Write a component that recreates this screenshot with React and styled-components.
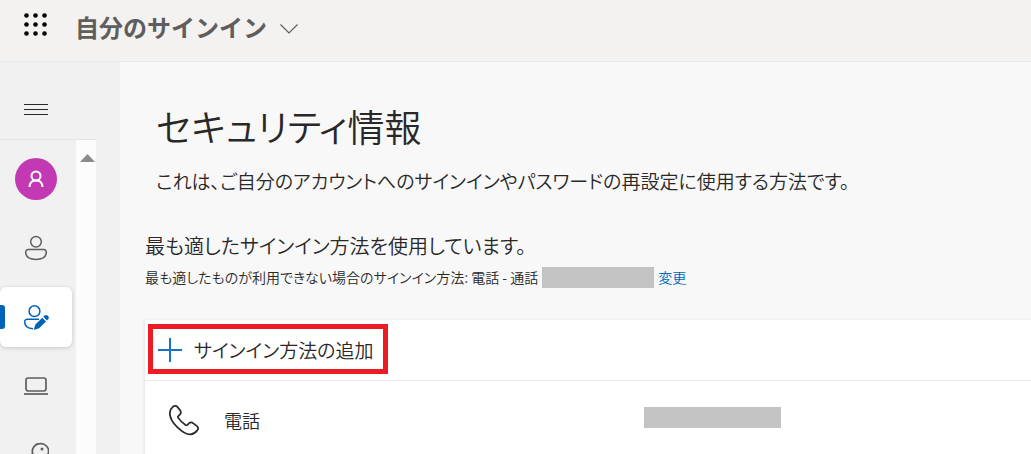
import styled, { createGlobalStyle } from 'styled-components';

const GlobalStyle = createGlobalStyle`
    * {
        box-sizing: border-box;
    }

    body {
        margin: 0;
        color: #292827;
        background: #f8f8f8;
        font-family: "Noto Sans CJK JP", "Noto Sans", sans-serif;
        font-weight: 350;
        font-feature-settings: "palt";
    }

    button {
        padding: 0;
        border: 0;
        color: inherit;
        background: none;
        font: inherit;
        cursor: pointer;
    }

    svg {
        display: block;
        flex: none;
    }
`;

const Page = styled.div`
    display: flex;
    flex-direction: column;
    height: 100vh;
    overflow: hidden;
`;

const Header = styled.header`
    display: flex;
    flex: none;
    align-items: center;
    height: 62px;
    padding: 0 24px 12px;
    gap: 27px;
    background: #f3f2f0;
    border-bottom: 1px solid #e9e9e9;
`;

const AppTitle = styled.button`
    display: flex;
    align-items: center;
    gap: 13px;
    padding-top: 4px;
    color: #605e5c;
    font-size: 24px;
    font-weight: 700;
    line-height: 32px;
    font-feature-settings: normal;

    svg {
        margin-top: 4px;
    }
`;

const Body = styled.div`
    display: flex;
    flex: 1;
    min-height: 0;
`;

const Sidebar = styled.nav`
    display: flex;
    flex: none;
    flex-direction: column;
    width: 120px;
    padding-right: 24px;
    background: #f1f1f1;
`;

const MenuToggle = styled.button`
    display: flex;
    flex: none;
    align-items: center;
    height: 78px;
    padding: 18px 24px 0;
    border-bottom: 1px solid #e5e5e5;
`;

const NavArea = styled.div`
    display: flex;
    flex: 1;
    min-height: 0;
    overflow: hidden;
`;

const NavList = styled.ul`
    display: flex;
    flex: 1;
    flex-direction: column;
    gap: 9px;
    margin: 0;
    padding: 9px 4px 0 0;
    list-style: none;
`;

const NavLink = styled.a`
    position: relative;
    display: flex;
    align-items: center;
    justify-content: center;
    height: 60px;
    color: ${({ $active }) => ($active ? '#0063b8' : '#5f5e5c')};
    background: ${({ $active }) => ($active ? '#fff' : 'transparent')};
    border-radius: 6px;
    box-shadow: ${({ $active }) => ($active ? '0 1px 4px rgba(0, 0, 0, 0.18)' : 'none')};
`;

const ActiveMark = styled.span`
    position: absolute;
    top: 18px;
    left: 0;
    width: 5px;
    height: 24px;
    background: #0063b8;
    border-radius: 0 3px 3px 0;
`;

const Avatar = styled.span`
    display: flex;
    align-items: center;
    justify-content: center;
    width: 42px;
    height: 42px;
    color: #fff;
    background: #c239b3;
    border-radius: 50%;
`;

const ScrollTrack = styled.div`
    flex: none;
    width: 20px;
    padding: 14px 3px 0 4px;
    background: #fcfcfc;
`;

const Main = styled.main`
    flex: 1;
    min-width: 0;
    padding: 36px 0 0 25px;
`;

const Intro = styled.div`
    padding-left: 11px;
`;

const Title = styled.h1`
    margin: 0;
    font-size: 37px;
    font-weight: 350;
    line-height: 56px;
`;

const Description = styled.p`
    margin: 12px 0 0;
    font-size: 19px;
    line-height: 30px;
`;

const Summary = styled.section`
    padding-top: 32px;
`;

const SummaryTitle = styled.p`
    margin: 0;
    font-size: 20px;
    line-height: 35px;
`;

const SummaryText = styled.p`
    display: flex;
    align-items: center;
    margin: 0;
    gap: 4px;
    font-size: 14px;
    line-height: 28px;
`;

const ChangeLink = styled.a`
    color: #0067b8;
    text-decoration: none;
`;

const Redacted = styled.span`
    display: inline-block;
    width: ${({ $width }) => $width}px;
    height: 21px;
    background: #c3c3c3;
`;

const Card = styled.section`
    margin-top: 29px;
    background: #fff;
    box-shadow: 0 1px 4px rgba(0, 0, 0, 0.14);
`;

const Toolbar = styled.div`
    padding: 4px 3px 6px;
    border-bottom: 1px solid #eaeaea;
`;

const AddButton = styled.button`
    && {
        display: flex;
        align-items: center;
        width: 240px;
        height: 50px;
        padding: 2px 0 0 5px;
        gap: 12px;
        border: 5px solid #ed1c24;
        font-size: 19px;
        line-height: 30px;
    }
`;

const MethodList = styled.ul`
    margin: 0;
    padding: 0;
    list-style: none;
`;

const Method = styled.li`
    display: grid;
    grid-template-columns: 31px 396px auto;
    align-items: center;
    justify-content: start;
    height: 78px;
    padding-left: 24px;
    column-gap: 24px;
    font-size: 18px;
`;

function LauncherIcon() {
    const steps = [2, 11, 20];
    return (
        <svg width="24" height="24" viewBox="0 0 24 24" fill="#000" aria-hidden="true">
            {steps.map((y) => steps.map((x) => (
                <circle key={`${x}-${y}`} cx={x + 0.5} cy={y + 0.5} r="2.3" />
            )))}
        </svg>
    );
}

function ChevronIcon() {
    return (
        <svg width="18" height="10" viewBox="0 0 18 10" fill="none" stroke="currentColor" strokeWidth="1.2" aria-hidden="true">
            <path d="M.5.5 9 9 17.5.5" />
        </svg>
    );
}

function MenuIcon() {
    return (
        <svg width="24" height="12" viewBox="0 0 24 12" fill="none" stroke="#292827" aria-hidden="true">
            <path d="M0 .5h24M0 5.5h24M0 10.5h24" />
        </svg>
    );
}

function AvatarIcon() {
    return (
        <svg width="16" height="18" viewBox="0 0 16 18" fill="none" stroke="currentColor" strokeWidth="2" aria-hidden="true">
            <circle cx="8" cy="6" r="4.5" />
            <path d="M1.5 17c.3-3.8 2.8-6.4 6.5-6.4s6.2 2.6 6.5 6.4" />
        </svg>
    );
}

function PersonIcon() {
    return (
        <svg width="24" height="26" viewBox="0 0 24 26" fill="none" stroke="currentColor" strokeWidth="1.5" aria-hidden="true">
            <circle cx="12" cy="6.8" r="5.3" />
            <path d="M4.2 14.5h15.6a2.5 2.5 0 0 1 2.5 2.5c0 4.9-4.1 7.4-10.3 7.4S1.7 21.9 1.7 17a2.5 2.5 0 0 1 2.5-2.5Z" />
        </svg>
    );
}

function PersonEditIcon() {
    return (
        <svg width="26" height="26" viewBox="0 0 26 26" fill="none" stroke="currentColor" strokeWidth="1.5" aria-hidden="true">
            <circle cx="11.5" cy="7.2" r="5.4" />
            <path d="M16 15.2H4.2A2.5 2.5 0 0 0 1.7 17.7c0 4.3 3.2 6.7 8.3 7" />
            <path fill="currentColor" stroke="none" d="m19.3 13.7 3.7 3.7-6.9 6.9-4.7 1.5c-.4.1-.6-.1-.5-.5l1.5-4.7 6.900-6.900ZM20.3 12.700l.9-.9a2.600 2.600 0 0 1 3.700 3.700l-.9.9-3.700-3.700Z" />
        </svg>
    );
}

function LaptopIcon() {
    return (
        <svg width="24" height="18" viewBox="0 0 24 18" fill="none" stroke="currentColor" strokeWidth="1.7" aria-hidden="true">
            <rect x="2" y="1" width="20" height="13" rx="2.2" />
            <path d="M0 17h24" />
        </svg>
    );
}

function KeyIcon() {
    return (
        <svg width="26" height="26" viewBox="0 0 26 26" fill="none" stroke="currentColor" strokeWidth="1.7" aria-hidden="true">
            <path d="M17 1.7a7.6 7.6 0 0 0-7.3 9.8L2 19v5h5v-3h3v-3h2.5l2-2A7.6 7.6 0 1 0 17 1.7Z" />
            <circle cx="19" cy="7" r="1.5" fill="currentColor" stroke="none" />
        </svg>
    );
}

function ScrollUpIcon() {
    return (
        <svg width="15" height="8" viewBox="0 0 15 8" fill="#8b8b8b" aria-hidden="true">
            <path d="M7.5 0 15 8H0Z" />
        </svg>
    );
}

function PlusIcon() {
    return (
        <svg width="24" height="24" viewBox="0 0 24 24" fill="none" stroke="#1574c4" strokeWidth="2" aria-hidden="true">
            <path d="M12 0v24M0 12h24" />
        </svg>
    );
}

function PhoneIcon() {
    return (
        <svg width="31" height="31" viewBox="0 0 31 31" fill="none" stroke="#292827" strokeWidth="1.7" strokeLinejoin="round" aria-hidden="true">
            <path d="M6.3.9c1 0 1.7.5 2.3 1.2l2.4 3c1.3 1.7 1.2 3.2-.2 4.6l-1.5 1.5c-.5.5-.5 1 0 1.7 1.9 2.9 4.2 5.2 7.2 7.1.8.5 1.3.4 1.9-.1l1.5-1.5c1.4-1.3 2.9-1.3 4.4-.1l3.4 2.6c1.6 1.3 1.8 3 .6 4.500-1.700 2.200-3.500 3.800-6.700 4-4 .2-9.200-3.200-13.400-7.300C4.100 18 .9 13.200.8 8.200.8 5.500 2 3.500 4 1.700 4.700 1.100 5.500.9 6.300.9Z" />
        </svg>
    );
}

const navItems = [
    { label: 'アカウント', icon: <Avatar><AvatarIcon /></Avatar> },
    { label: '概要', icon: <PersonIcon /> },
    { label: 'セキュリティ情報', icon: <PersonEditIcon />, active: true },
    { label: 'デバイス', icon: <LaptopIcon /> },
    { label: 'パスワード', icon: <KeyIcon /> },
];

function App() {
    return (
        <Page>
            <GlobalStyle />
            <Header>
                <button type="button" aria-label="アプリ起動ツール">
                    <LauncherIcon />
                </button>
                <AppTitle type="button">
                    自分のサインイン
                    <ChevronIcon />
                </AppTitle>
            </Header>
            <Body>
                <Sidebar>
                    <MenuToggle type="button" aria-label="メニュー">
                        <MenuIcon />
                    </MenuToggle>
                    <NavArea>
                        <NavList>
                            {navItems.map(({ label, icon, active }) => (
                                <li key={label}>
                                    <NavLink href="#" aria-label={label} $active={active}>
                                        {active && <ActiveMark />}
                                        {icon}
                                    </NavLink>
                                </li>
                            ))}
                        </NavList>
                        <ScrollTrack>
                            <ScrollUpIcon />
                        </ScrollTrack>
                    </NavArea>
                </Sidebar>
                <Main>
                    <Intro>
                        <Title>セキュリティ情報</Title>
                        <Description>これは、ご自分のアカウントへのサインインやパスワードの再設定に使用する方法です。</Description>
                    </Intro>
                    <Summary>
                        <SummaryTitle>最も適したサインイン方法を使用しています。</SummaryTitle>
                        <SummaryText>
                            <span>最も適したものが利用できない場合のサインイン方法: 電話 - 通話</span>
                            <Redacted $width={112} />
                            <ChangeLink href="#">変更</ChangeLink>
                        </SummaryText>
                    </Summary>
                    <Card>
                        <Toolbar>
                            <AddButton type="button">
                                <PlusIcon />
                                サインイン方法の追加
                            </AddButton>
                        </Toolbar>
                        <MethodList>
                            <Method>
                                <PhoneIcon />
                                <span>電話</span>
                                <span><Redacted $width={137} /></span>
                            </Method>
                        </MethodList>
                    </Card>
                </Main>
            </Body>
        </Page>
    );
}

export default App;
